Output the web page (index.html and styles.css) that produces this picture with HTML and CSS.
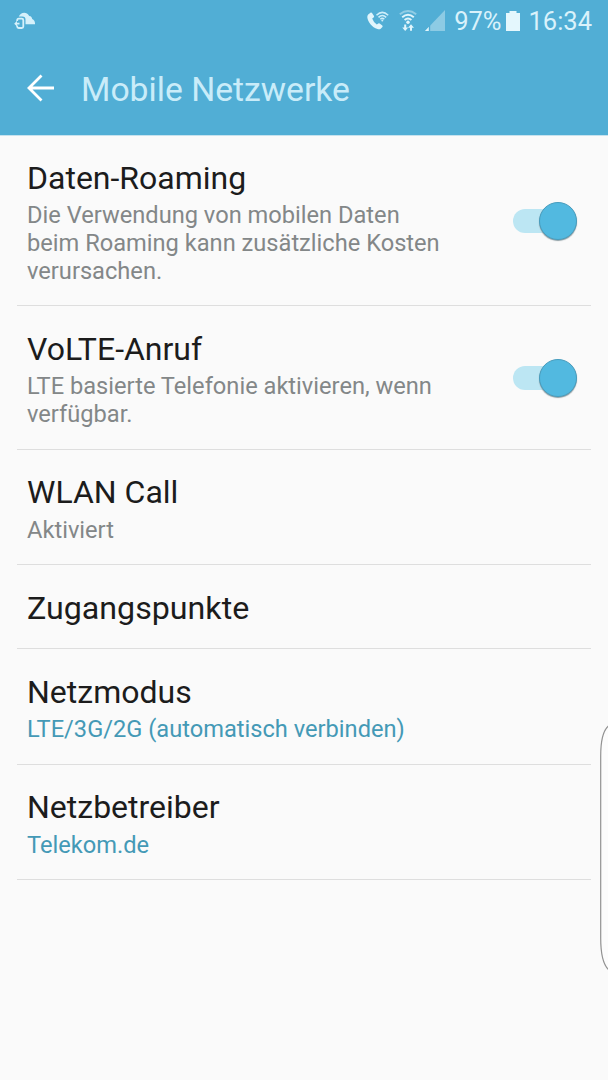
FILE: index.html
```html
<!DOCTYPE html>
<html lang="de">
<head>
<meta charset="utf-8">
<title>Mobile Netzwerke</title>
<link rel="stylesheet" href="styles.css">
</head>
<body>
<div class="screen">
  <header class="header">
    <div class="status">
      <svg class="status-cloud" width="24" height="20" viewBox="0 0 24 20">
        <path d="M4.800 4.600C6.500 .2 12.500 -1 15.200 3.900C17.300 4 18 5.300 18.200 7C20.200 7.700 21.200 9.500 21 12.200H11.500V7.500Q11.500 4.600 8.500 4.600Z" fill="#d6f1fb"/>
        <path d="M3.200 9V8.200Q3.200 6.700 4.700 6.700H7.800Q9.300 6.700 9.300 8.200V14.500Q9.300 16 7.800 16H4.700Q3.200 16 3.200 14.500V13.500" fill="none" stroke="#d6f1fb" stroke-width="1.800"/>
        <path d="M.2 11.700L3 8.800V10.800H5.500V12.600H3V14.600Z" fill="#d6f1fb"/>
      </svg>
      <div class="status-right">
        <svg class="icon-call" width="23" height="20" viewBox="0 0 23 20">
          <path d="M1.200 3.500L3.800 1.600Q4.500 1.200 5 2L7 5Q7.400 5.800 6.600 6.400L5.200 7.500Q6.500 11.300 9.800 13.600L11.300 12.400Q12 12 12.700 12.500L15.300 14.600Q16 15.300 15.400 16L13.700 17.800Q12.500 18.700 10.500 18.100C5 16.400.7 10.500.3 6.200Q.2 4.500 1.200 3.500Z" fill="#e0f5fc"/>
          <g fill="none" stroke="#cdeefa" stroke-width="1.500"><path d="M9.500 4.200Q15.300-1.500 21.200 4.200"/><path d="M11.500 6.400Q15.300 2.600 19.200 6.400"/><path d="M13.300 8.300Q15.300 6.200 17.300 8.300"/></g>
          <circle cx="15.300" cy="9.600" r="1" fill="#cdeefa"/>
        </svg>
        <svg class="icon-wifi" width="18" height="22" viewBox="0 0 18 22">
          <g fill="none" stroke-width="1.900"><path d="M.8 4.200Q9-2.200 17.200 4.200" stroke="#91cde5"/><path d="M3.200 7.200Q9 2.200 14.800 7.200" stroke="#e0f5fc"/><path d="M5.600 10Q9 6.800 12.400 10" stroke="#e0f5fc"/></g>
          <circle cx="9" cy="12.300" r="1.700" fill="#e0f5fc"/>
          <path d="M5.200 14.500h2v3h2L6.200 21L3.200 17.500H5.200ZM11 20.700h2v-3h2L12 14.200L9 17.700H11Z" fill="#e0f5fc"/>
        </svg>
        <svg class="icon-signal" width="21" height="21" viewBox="0 0 21 21">
          <path d="M20 0V21H0Z" fill="#8dcbe4"/><path d="M0 21L4 16.800V21Z" fill="#e0f5fc"/><path d="M4.500 15V21" stroke="#51acd4" stroke-width="1.400"/>
        </svg>
        <span class="percent">97%</span>
        <svg class="icon-battery" width="14" height="20" viewBox="0 0 14 20"><path d="M0 2H3.500V0H10.500V2H14V20H0Z" fill="#e4f7fd"/></svg>
        <span class="clock">16:34</span>
      </div>
    </div>
    <div class="bar">
      <svg class="back" width="28" height="28" viewBox="0 0 28 28"><path d="M27 14H2M14.500 1.500L2 14L14.500 26.500" fill="none" stroke="#fff" stroke-width="2.800"/></svg>
      <h1 class="heading">Mobile Netzwerke</h1>
    </div>
  </header>
  <main class="list">
    <section class="row row-first">
      <div class="text"><h2 class="title">Daten-Roaming</h2><p class="sub">Die Verwendung von mobilen Daten<br>beim Roaming kann zusätzliche Kosten<br>verursachen.</p></div>
      <div class="switch"><div class="knob"></div></div>
    </section>
    <section class="row">
      <div class="text"><h2 class="title">VoLTE-Anruf</h2><p class="sub">LTE basierte Telefonie aktivieren, wenn<br>verfügbar.</p></div>
      <div class="switch"><div class="knob"></div></div>
    </section>
    <section class="row row-call"><div class="text"><h2 class="title">WLAN Call</h2><p class="sub">Aktiviert</p></div></section>
    <section class="row"><div class="text"><h2 class="title title-wide">Zugangspunkte</h2></div></section>
    <section class="row"><div class="text"><h2 class="title">Netzmodus</h2><p class="sub accent">LTE/3G/2G (automatisch verbinden)</p></div></section>
    <section class="row row-last"><div class="text"><h2 class="title">Netzbetreiber</h2><p class="sub accent">Telekom.de</p></div></section>
  </main>
  <svg class="edge" width="8" height="248" viewBox="0 0 8 248"><path d="M9 1.500C3 6 .7 17 .7 32V214C.7 230 3 241 9 246" fill="#fcfcfc" stroke="#929292" stroke-width="1.200"/></svg>
</div>
</body>
</html>
```
FILE: styles.css
```css
* { box-sizing: border-box; }
body { margin: 0; font-family: Roboto, "Liberation Sans", sans-serif; }
h1, h2, p { margin: 0; font-weight: 400; }
svg { display: block; flex: none; }
.screen { position: relative; height: 1080px; overflow: hidden; background: #fafafa; }
.header { height: 136px; background: #51aed5; border-bottom: 1px solid #c6e2ee; }
.status { display: flex; justify-content: space-between; height: 43px; padding: 0 16px 0 14px; }
.status-cloud { margin-top: 12px; }
.status-right { display: flex; align-items: flex-start; color: #d9f2fb; font-size: 25.500px; line-height: 42px; white-space: nowrap; }
.icon-call { margin: 11px 9px 0 0; }
.icon-wifi { margin: 10px 8px 0 0; }
.icon-signal { margin: 10px 8px 0 0; }
.icon-battery { margin: 11px 8px 0 5px; }
.bar { display: flex; align-items: center; height: 91px; padding-left: 27px; }
.back { margin-top: -1px; }
.heading { margin: 2px 0 0 26px; color: #c9ecf9; font-size: 33.700px; line-height: 40px; }
.list { padding: 0 17px; }
.row { display: flex; justify-content: space-between; align-items: center; padding: 24px 13px 21px 10px; border-bottom: 1px solid #dedede; }
.row-first { padding-top: 23px; padding-bottom: 20px; }
.row-call, .row-last { padding-top: 23px; }
.row-call .sub, .row-last .sub { margin: 5px 0 -1px; }
.title { color: #1c1c1c; font-size: 32px; line-height: 38px; white-space: nowrap; }
.title-wide { font-size: 32.200px; }
.sub { margin-top: 4px; color: #838788; font-size: 23.650px; line-height: 28px; white-space: nowrap; }
.accent { color: #4499b6; }
.switch { position: relative; display: flex; align-items: center; justify-content: flex-end; flex: none; width: 64px; height: 40px; margin: -3px 1px 0 0; }
.switch::before { content: ""; position: absolute; left: 0; top: 8px; width: 50px; height: 24px; border-radius: 12px; background: #bce6f3; }
.knob { position: relative; width: 38px; height: 38px; border-radius: 50%; background: #52b9e0; border: 1px solid #479dbe; box-shadow: 0 1px 1px #8b9ca3; }
.edge { position: absolute; right: 0; top: 724px; }
```
